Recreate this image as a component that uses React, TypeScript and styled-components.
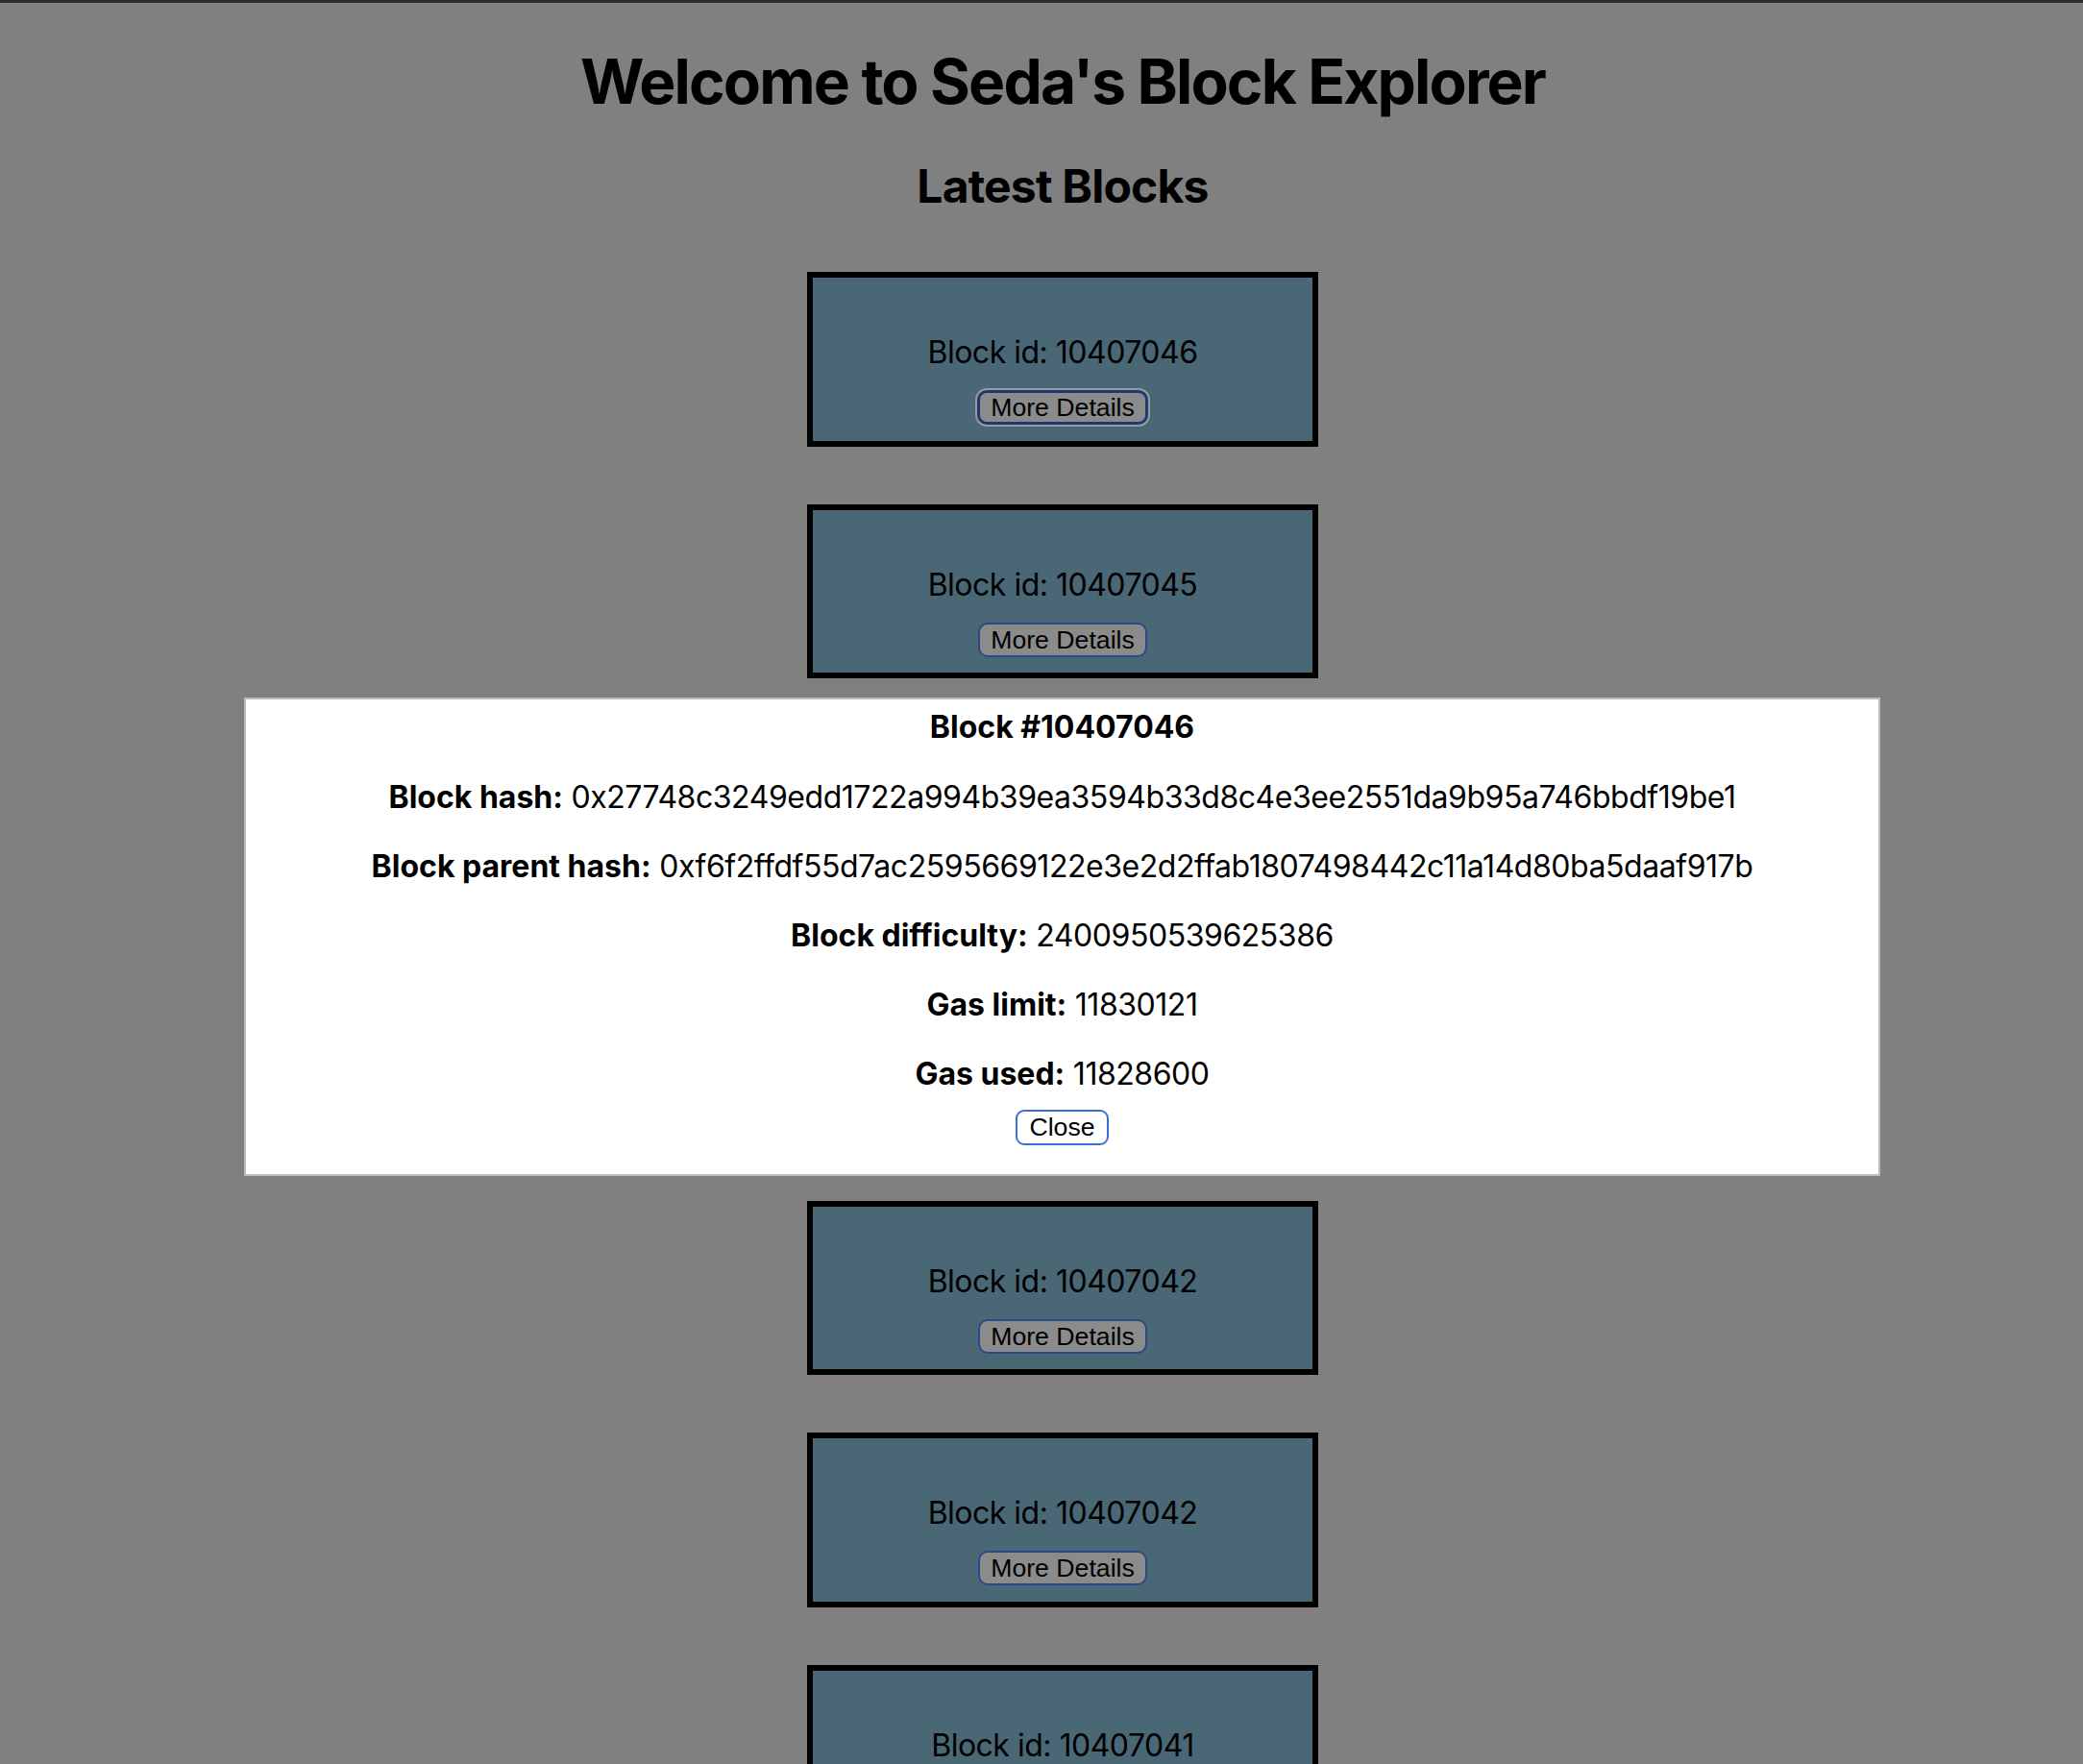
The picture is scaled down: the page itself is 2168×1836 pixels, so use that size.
import React from "react";
import styled, { createGlobalStyle, css } from "styled-components";

const GlobalStyle = createGlobalStyle`
  html, body {
    margin: 0;
    padding: 0;
  }
  body {
    background: #808080;
    border-top: 3px solid #2b2b2b;
    font-family: "Inter", "Liberation Sans", sans-serif;
    color: #000;
  }
`;

const Page = styled.main`
  display: flex;
  flex-direction: column;
  align-items: center;
  padding-left: 44px;
  padding-bottom: 60px;
`;

const Title = styled.h1`
  margin: 43px 0 0;
  font-size: 64px;
  line-height: 78px;
  font-weight: 700;
  letter-spacing: -1.85px;
`;

const Subtitle = styled.h2`
  margin: 41px 0 0;
  font-size: 48px;
  line-height: 58px;
  font-weight: 700;
  letter-spacing: -0.8px;
`;

const BlockList = styled.section`
  display: flex;
  flex-direction: column;
  align-items: center;
  gap: 60px;
  margin-top: 60px;
`;

const BlockCard = styled.div`
  box-sizing: border-box;
  width: 532px;
  height: 181.67px;
  border: 6px solid #000;
  background: #4a6775;
  display: flex;
  flex-direction: column;
  align-items: center;
  padding-top: 59px;
`;

const BlockId = styled.p`
  margin: 0;
  font-size: 32px;
  line-height: 38px;
  letter-spacing: -0.5px;
`;

const DetailsButton = styled.button<{ $focused?: boolean }>`
  margin-top: 20px;
  box-sizing: border-box;
  height: 36px;
  padding: 0 11px;
  font-family: "Liberation Sans", "Inter", sans-serif;
  font-size: 26.67px;
  line-height: 30px;
  color: #000;
  background: #8b8b8b;
  border: 2px solid #2a4a86;
  border-radius: 10px;
  ${(p) =>
    p.$focused &&
    css`
      border: 3px solid #1d3a73;
      box-shadow: 0 0 0 2px #9a9a9a;
    `}
`;

const ModalPanel = styled.div`
  position: absolute;
  left: 254px;
  top: 726px;
  width: 1703px;
  height: 498px;
  box-sizing: border-box;
  background: #fff;
  border: 2px solid #bdbdbd;
  padding: 9px 0 0;
  display: flex;
  flex-direction: column;
  align-items: center;
`;

const ModalTitle = styled.h4`
  margin: 0 0 33px;
  font-size: 32px;
  line-height: 40px;
  font-weight: 700;
  letter-spacing: 0;
`;

const DetailRow = styled.p`
  margin: 0 0 32px;
  font-size: 32px;
  line-height: 40px;
  letter-spacing: -0.45px;
  &:last-of-type {
    margin-bottom: 17px;
  }
`;

const Label = styled.b`
  font-weight: 700;
  letter-spacing: 0;
`;

const CloseButton = styled.button`
  box-sizing: border-box;
  height: 37px;
  padding: 0 12px;
  font-family: "Liberation Sans", "Inter", sans-serif;
  font-size: 26.67px;
  line-height: 31px;
  color: #000;
  background: #fff;
  border: 2px solid #3a6fd8;
  border-radius: 9px;
`;

const blocks = [
  10407046, 10407045, 10407044, 10407043, 10407042, 10407042, 10407041,
];

const details: [string, string][] = [
  ["Block hash:", "0x27748c3249edd1722a994b39ea3594b33d8c4e3ee2551da9b95a746bbdf19be1"],
  ["Block parent hash:", "0xf6f2ffdf55d7ac2595669122e3e2d2ffab1807498442c11a14d80ba5daaf917b"],
  ["Block difficulty:", "2400950539625386"],
  ["Gas limit:", "11830121"],
  ["Gas used:", "11828600"],
];

export default function App() {
  return (
    <>
      <GlobalStyle />
      <Page>
        <Title>Welcome to Seda's Block Explorer</Title>
        <Subtitle>Latest Blocks</Subtitle>
        <BlockList>
          {blocks.map((id, i) => (
            <BlockCard key={i}>
              <BlockId>Block id: {id}</BlockId>
              <DetailsButton $focused={i === 0}>More Details</DetailsButton>
            </BlockCard>
          ))}
        </BlockList>
      </Page>
      <ModalPanel role="dialog">
        <ModalTitle>Block #10407046</ModalTitle>
        {details.map(([label, value]) => (
          <DetailRow key={label}>
            <Label>{label}</Label> {value}
          </DetailRow>
        ))}
        <CloseButton>Close</CloseButton>
      </ModalPanel>
    </>
  );
}
